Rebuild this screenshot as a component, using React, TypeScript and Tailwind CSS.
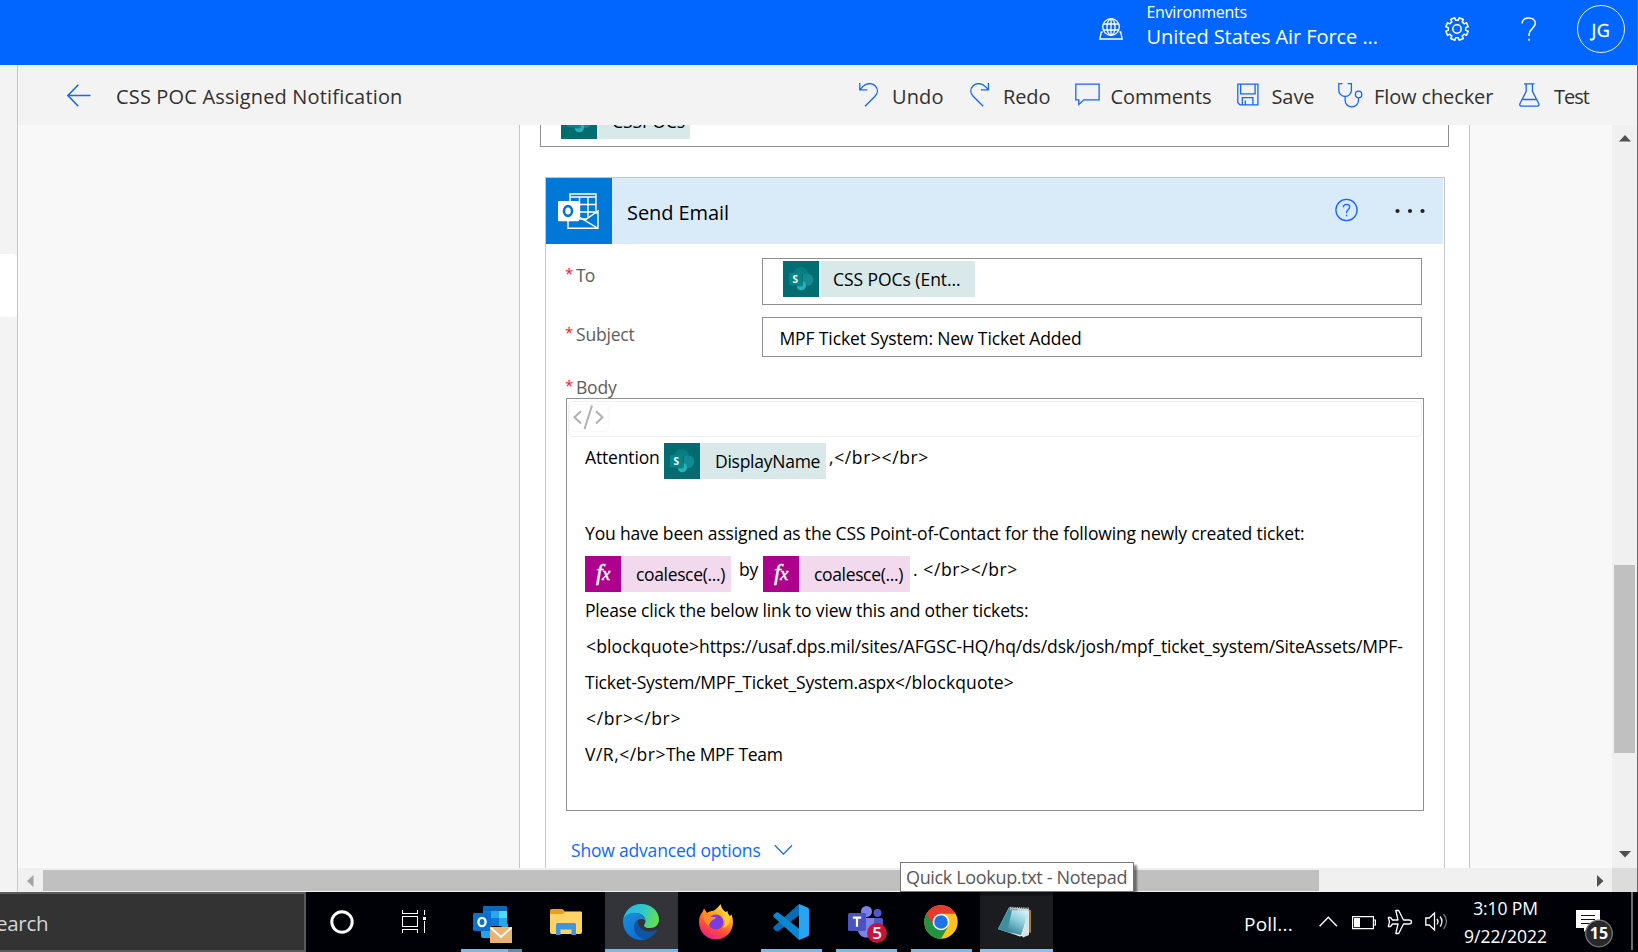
import type { ReactNode } from "react";

type IconProps = { className?: string };

function Label({ className = "", children }: { className?: string; children: ReactNode }) {
  return <span className={`block shrink-0 whitespace-pre ${className}`}>{children}</span>;
}

/* ---------- header icons ---------- */

function EnvironmentIcon({ className }: IconProps) {
  return (
    <svg className={className} width="24" height="22" viewBox="0 0 24 22" fill="none" stroke="white" strokeWidth="1.3">
      <circle cx="12" cy="9" r="8.3" />
      <ellipse cx="12" cy="9" rx="4" ry="8.3" />
      <path d="M12 .7v16.6M4.4 6h15.2M4.4 12h15.2M3.7 14H2.3L.8 21h22.4l-1.5-7h-1.4" />
    </svg>
  );
}

function gearPath() {
  const pts: string[] = [];
  const teeth = 8;
  for (let i = 0; i < teeth; i++) {
    const base = (i / teeth) * Math.PI * 2 - Math.PI / 2 + Math.PI / 8;
    const steps: [number, number][] = [[-0.24, 8.8], [-0.2, 11.4], [0.2, 11.4], [0.24, 8.8]];
    steps.forEach(([a, r]) => pts.push(`${(12 + Math.cos(base + a) * r).toFixed(2)} ${(12 + Math.sin(base + a) * r).toFixed(2)}`));
  }
  return `M${pts.join("L")}Z`;
}

function GearIcon({ className }: IconProps) {
  return (
    <svg className={className} width="24" height="24" viewBox="0 0 24 24" fill="none" stroke="white" strokeWidth="1.5" strokeLinejoin="round">
      <path d={gearPath()} />
      <circle cx="12" cy="12" r="4.2" />
    </svg>
  );
}

function HelpIcon({ className }: IconProps) {
  return (
    <svg className={className} width="16" height="24" viewBox="0 0 16 24" fill="none" stroke="white" strokeWidth="1.5">
      <path d="M1.200 6.500C1.200 3 4 .9 7.700 .9s6.600 2 6.600 5.400c0 5-6.300 5.700-6.300 11.200v1.500M8 21.700v2" />
    </svg>
  );
}

/* ---------- command bar icons ---------- */

const blueLine = { fill: "none", stroke: "#1466ff", strokeWidth: 1.3 };

function BackIcon({ className }: IconProps) {
  return (
    <svg className={className} width="24" height="23" viewBox="0 0 24 23" {...blueLine} strokeWidth="1.6">
      <path d="M11.300 .8.9 11.500l10.400 10.700M1 11.500h22.500" />
    </svg>
  );
}

function UndoIcon({ className }: IconProps) {
  return (
    <svg className={className} width="20" height="24" viewBox="0 0 20 24" {...blueLine}>
      <path d="M.8 0v6.800h7.500M1 6.600l2.800-3C8-.7 13.500 0 16.300 3c3 3.200 2.700 7.300-.3 10.300L6 23.300" />
    </svg>
  );
}

function RedoIcon({ className }: IconProps) {
  return (
    <svg className={className} width="20" height="24" viewBox="0 0 20 24" {...blueLine}>
      <path d="M18.400 0v6.800h-7.500M18.200 6.600l-2.800-3C11.200-.7 5.700 0 2.900 3c-3 3.200-2.700 7.300.3 10.300l10 10" />
    </svg>
  );
}

function CommentIcon({ className }: IconProps) {
  return (
    <svg className={className} width="25" height="23" viewBox="0 0 25 23" {...blueLine}>
      <path d="M.8 1.200h23.300v15.600H8.800l-5 4.700v-4.700h-3z" />
    </svg>
  );
}

function SaveIcon({ className }: IconProps) {
  return (
    <svg className={className} width="22" height="23" viewBox="0 0 22 23" {...blueLine}>
      <path d="M.8 1.200h20.100v20.600H3L.8 19.700zM3.600 1.200v9.600h14.500V1.200M5.300 21.800v-7.200h10.600v7.200M8.300 17.500v4.300" />
    </svg>
  );
}

function StethoscopeIcon({ className }: IconProps) {
  return (
    <svg className={className} width="25" height="25" viewBox="0 0 25 25" {...blueLine}>
      <path d="M4.500 .7H.8v6.500a6.200 6.200 0 0 0 12.600 0V.7H9.700M7.100 13.400v3.800a6.700 6.700 0 0 0 13.400 0v-2.500" />
      <circle cx="20.600" cy="11.400" r="3.200" />
    </svg>
  );
}

function FlaskIcon({ className }: IconProps) {
  return (
    <svg className={className} width="21" height="24" viewBox="0 0 21 24" {...blueLine}>
      <path d="M5 .8h10.500M7.200 .8v7.500L1 20.500c-.7 1.500 0 2.700 1.400 2.700h15.900c1.400 0 2.100-1.200 1.400-2.700L13.400 8.300V.8M3.700 16.500H17" />
    </svg>
  );
}

function Command({ icon, label, box, gap }: { icon: ReactNode; label: string; box: string; gap: string }) {
  return (
    <div className="flex shrink-0 items-start">
      <div className={`shrink-0 ${gap}`}>{icon}</div>
      <Label className={`pt-[2px] text-[20px] leading-[24px] text-[#323130] ${box}`}>{label}</Label>
    </div>
  );
}

/* ---------- flow tokens ---------- */

function SharePointTile() {
  return (
    <svg className="shrink-0" width="36" height="36" viewBox="0 0 36 36">
      <rect width="36" height="36" fill="#036c70" />
      <circle cx="17.700" cy="13.500" r="7.500" fill="#067e82" />
      <circle cx="24" cy="18.700" r="6.300" fill="#118b91" />
      <circle cx="18.300" cy="24.600" r="4.700" fill="#27b3be" />
      <rect x="7" y="13" width="13" height="12.500" rx="1" fill="#02565a" opacity=".5" />
      <rect x="6" y="12" width="12.600" height="12.400" rx="1" fill="#078489" />
      <text x="12.300" y="21.800" fontSize="10" fontWeight="700" fontFamily="Open Sans, sans-serif" textAnchor="middle" fill="white">S</text>
    </svg>
  );
}

function SharePointToken({ label, box, text = "leading-[36px] tracking-[-0.2px]" }: { label: string; box: string; text?: string }) {
  return (
    <div className={`flex h-9 shrink-0 bg-[#d9e8e8] ${box}`}>
      <SharePointTile />
      <Label className={`pl-[14px] text-[17.5px] ${text}`}>{label}</Label>
    </div>
  );
}

function FxToken({ box }: { box: string }) {
  return (
    <div className={`flex h-9 shrink-0 bg-[#f2d9ee] ${box}`}>
      <span className="block h-9 w-9 bg-[#ad008c] text-center font-['Liberation_Serif',serif] text-[24px] leading-[33px] font-normal tracking-[-0.5px] text-white italic [-webkit-text-stroke:0.4px_white]">
        f<span className="text-[19px]">x</span>
      </span>
      <Label className="pl-[15px] text-[17.5px] leading-[37px] tracking-[-0.35px]">coalesce(...)</Label>
    </div>
  );
}

function OutlookConnectorTile() {
  return (
    <svg className="shrink-0" width="66" height="66" viewBox="0 0 66 66">
      <rect width="66" height="66" fill="#0078d7" />
      <g fill="none" stroke="white" strokeWidth="1.400">
        <path d="M24 23v-7h26v20M24 19h26" />
        <path d="M33.500 19v22M42 19v20M24 26.500h26M24 34h25M33 41h8" />
        <path d="M22 43v7.300h30V33L38.500 42.300 52 50.300M34 39.500l4.500 2.800" />
      </g>
      <rect x="12" y="23" width="21" height="20.300" rx="1" fill="white" />
      <ellipse cx="22" cy="33" rx="4" ry="4.900" fill="none" stroke="#0078d7" strokeWidth="2.600" />
    </svg>
  );
}

function FieldLabel({ children, className = "" }: { children: ReactNode; className?: string }) {
  return (
    <div className={`flex shrink-0 text-[17.5px] leading-[24px] ${className}`}>
      <span className="w-[11px] text-[15px] leading-[21px] text-[#e0202f]">*</span>
      <span className="text-[#605e5c]">{children}</span>
    </div>
  );
}

/* ---------- taskbar ---------- */

function OutlookAppIcon() {
  return (
    <svg width="40" height="38" viewBox="0 0 40 38">
      <rect x="10" y="0" width="24" height="20" rx="1.500" fill="#0f6cbd" />
      <rect x="10" y="0" width="24" height="5" rx="1" fill="#1068b5" />
      <path d="M10 5h8v7h-8z" fill="#0f78d4" />
      <path d="M18 5h8v7h-8z" fill="#28a8ea" />
      <path d="M26 5h8v7h-8z" fill="#50d9ff" />
      <path d="M18 12h8v8h-8z" fill="#0f78d4" />
      <path d="M26 12h8v8h-8z" fill="#28a8ea" />
      <path d="M8 16l14 8 13-7v15H10a2 2 0 0 1-2-2z" fill="#1fa5e8" />
      <rect x="0" y="7" width="18" height="18" rx="1.500" fill="#0a70cf" />
      <ellipse cx="9" cy="16" rx="3.600" ry="4.200" fill="none" stroke="white" strokeWidth="2.300" />
      <rect x="17" y="21" width="22" height="16" fill="#e9b372" />
      <path d="M17.500 21.500 28 31l10.500-9.500" fill="none" stroke="white" strokeWidth="1.800" />
    </svg>
  );
}

function ExplorerIcon() {
  return (
    <svg width="32" height="27" viewBox="0 0 32 27">
      <path d="M0 1.500Q0 0 1.500 0h11l2.500 2.500h16Q32 2.500 32 4v8H0z" fill="#e4a11b" />
      <path d="M0 5h13l2-2.300h16q1 0 1 1V23q0 2-2 2H2q-2 0-2-2z" fill="#fdd465" />
      <path d="M6 15.500Q6 14 7.500 14h17q1.500 0 1.500 1.500V26h-4.500v-5.500h-11V26H6z" fill="#3d96de" />
    </svg>
  );
}

function EdgeIcon() {
  return (
    <svg width="36" height="36" viewBox="0 0 36 36">
      <defs>
        <linearGradient id="edgeTop" x1="0" y1="0.300" x2="1" y2="0.600">
          <stop offset="0" stopColor="#29b6ea" />
          <stop offset=".5" stopColor="#2fc7c9" />
          <stop offset="1" stopColor="#66e14b" />
        </linearGradient>
        <linearGradient id="edgeLeft" x1="0" y1="0" x2=".5" y2="1">
          <stop offset="0" stopColor="#1b8fd6" />
          <stop offset="1" stopColor="#0a72d8" />
        </linearGradient>
      </defs>
      <path d="M0 17C1 7 8.500 0 18 0c10.500 0 18 7.500 18 15.500 0 5-3.800 8.500-9 8.500-4 0-6-1.300-6-2.600 0-1 1.500-1.700 1.500-4.400 0-4-4-8-10-8C6 9 1.500 12.500 0 17z" fill="url(#edgeTop)" />
      <path d="M0 18C0 12.500 5 8.800 11.500 8.800c6.500 0 10.800 3.700 11 7.800-1-1-2.500-1.700-4.300-1.700-4 0-6.400 3.200-6.400 7.300 0 6.500 5 12.300 11.800 12.800A18 18 0 0 1 0 18z" fill="url(#edgeLeft)" />
      <path d="M15 15.700c-6.500 3.800-5.400 15.800 5 19.300 5.500 1.300 11-3.500 13.800-8 .3-.7-.3-1-1-.7-8 3.500-18.500-.5-17.800-10.600z" fill="#1054a4" />
    </svg>
  );
}

function FirefoxIcon() {
  return (
    <svg width="34" height="36" viewBox="0 0 34 36">
      <defs>
        <linearGradient id="ffBody" x1=".8" y1="0" x2=".3" y2="1">
          <stop offset="0" stopColor="#fff44f" />
          <stop offset=".4" stopColor="#ff9a1f" />
          <stop offset=".7" stopColor="#ff4a3c" />
          <stop offset="1" stopColor="#e5208a" />
        </linearGradient>
      </defs>
      <path d="M3.500 8 5 4.500 8 9c2-1.500 4-2 6-2 3-1.500 5.500-4 7.500-7 .5 2.700 1.500 4.500 3.200 6.500L26.500 8l2-1c0 2 1 3.500 2.500 5l1.500-1.500c1 2.500 1.500 5 1.500 7.500C34 28 26.500 35.500 17 35.500S0 28 0 18c0-4 1.200-7.500 3.500-10z" fill="url(#ffBody)" />
      <circle cx="17" cy="18" r="7.500" fill="#7a3be0" />
      <path d="M4 12c3-1.500 6-1 8 1h5c-.5 2-2.500 2.500-4 3.500-1.500 1-2 2.500-3.500 5.500-3-2-4.500-6-5.500-10z" fill="#ff8f24" />
      <path d="M23 5c2 4 1 6 .5 8 3 3 3 8 0 11 5-1 8-5 7.500-10z" fill="#ffd43a" opacity=".8" />
    </svg>
  );
}

function VsCodeIcon() {
  return (
    <svg width="36" height="36" viewBox="0 0 36 36">
      <path d="M26 0 1 22.500c-1 1-1 2 0 3L3 27c1 .7 1.800.6 2.600 0L26.500 11z" fill="#0a6cb4" />
      <path d="M26 36 1 13.300c-1-1-1-2 0-3L3 8.800c1-.7 1.800-.6 2.600 0L26.500 25z" fill="#0f86d0" />
      <path d="M26 0l8.500 3.500c1 .5 1.500 1.200 1.500 2.300v24.400c0 1-.5 1.800-1.500 2.300L26 36z" fill="#27a4f2" />
    </svg>
  );
}

function TeamsIcon() {
  return (
    <svg width="40" height="38" viewBox="0 0 40 38">
      <circle cx="18.500" cy="5.500" r="5.500" fill="#7b83eb" />
      <circle cx="29.500" cy="7" r="4" fill="#5059c9" />
      <path d="M24 12h9.500q1.500 0 1.500 1.500V23c0 4-4 6-8 5z" fill="#5059c9" />
      <path d="M10 12h16v12c0 10-15 10-16 0z" fill="#7b83eb" />
      <rect x="0" y="7" width="18" height="18" rx="1.500" fill="#4b53bc" />
      <path d="M4.800 11.700h8.400M9 11.700v9" stroke="white" strokeWidth="2.200" />
      <circle cx="29" cy="27" r="10" fill="#c4143b" />
      <text x="29" y="33" textAnchor="middle" fontSize="17" fontWeight="600" fontFamily="Open Sans, sans-serif" fill="white">5</text>
    </svg>
  );
}

function ChromeIcon() {
  return (
    <svg width="34" height="34" viewBox="0 0 34 34">
      <circle cx="17" cy="17" r="16.700" fill="#fcc31e" />
      <path d="M17 17 2.500 8.700A16.700 16.700 0 0 0 17 33.700l7.200-12.500z" fill="#229342" />
      <path d="M2.500 8.700A16.700 16.700 0 0 1 31.500 8.700H17z M2.500 8.700 9.800 21.200 17 17V8.700z" fill="#e33b2e" />
      <circle cx="17" cy="17" r="8.300" fill="white" />
      <circle cx="17" cy="17" r="6.800" fill="#1a73e8" />
    </svg>
  );
}

function NotepadIcon() {
  return (
    <svg width="34" height="32" viewBox="0 0 34 32">
      <defs>
        <linearGradient id="page" x1=".2" y1="1" x2=".7" y2="0">
          <stop offset="0" stopColor="#2f7f93" />
          <stop offset=".6" stopColor="#8fd0de" />
          <stop offset="1" stopColor="#d4eef3" />
        </linearGradient>
      </defs>
      <path d="M30 4h3v23l-3-1z" fill="#a87a2a" />
      <path d="M11 1.500 0 23l22 7.500L31 28V3z" fill="#dfeef0" />
      <path d="M11 2 0 23l10 3.500L20 3z" fill="#3f8fa0" />
      <path d="M14 4 9 26l14 3L31 4.500z" fill="url(#page)" />
      <path d="M24 30l7-25v24l-6 2.500z" fill="#d9e2e4" />
      <path d="M12 2.500l19 .8" stroke="#b9bfc2" strokeWidth="3.500" strokeDasharray="1.200 1" />
    </svg>
  );
}

function TaskButton({ children, box, bar, pad }: { children: ReactNode; box: string; bar: string; pad: string }) {
  return (
    <div className={`flex h-[60px] shrink-0 flex-col justify-between ${box}`}>
      <div className={pad}>{children}</div>
      <div className={`flex h-[3px] ${bar}`} />
    </div>
  );
}

function Taskbar() {
  return (
    <div className="flex h-[60px] w-full bg-[#000107] text-white">
      <div className="h-[60px] w-[306px] shrink-0 overflow-hidden border-y-2 border-r-2 border-[#5c5c5c] bg-[#333333]">
        <Label className="-ml-[4px] text-[20.5px] leading-[59px] tracking-[-0.3px] text-[#d6d6d6]">earch</Label>
      </div>
      <div className="w-[96px] shrink-0 pt-[18px] pl-[24px]">
        <svg width="24" height="24" viewBox="0 0 24 24">
          <circle cx="12" cy="12" r="10.200" fill="none" stroke="white" strokeWidth="3" />
        </svg>
      </div>
      <div className="w-[59px] shrink-0 pt-[18px]">
        <svg width="25" height="24" viewBox="0 0 25 24" fill="none" stroke="white" shapeRendering="crispEdges">
          <path d="M.5 0v3.500h15V0M.5 6.500h15v10H.5zM.5 23v-3.500h15V23M22.500 0v5M22.500 11v12" />
          <path d="M21 7h3v3h-3z" fill="white" stroke="none" />
        </svg>
      </div>
      <div className="flex h-[60px] w-[61px] shrink-0 flex-col justify-between">
        <div className="pt-[14px] pl-[12px]"><OutlookAppIcon /></div>
        <div className="flex h-[3px]">
          <div className="w-[47px] bg-[#76b9ed]" />
          <div className="w-[14px] bg-[#5c8ab0]" />
        </div>
      </div>
      <TaskButton box="ml-[28px] w-[55px]" pad="pt-[17px]" bar=""><ExplorerIcon /></TaskButton>
      <TaskButton box="w-[73px] bg-[#33343a]" pad="pt-[12px] pl-[18px]" bar="bg-[#76b9ed]"><EdgeIcon /></TaskButton>
      <TaskButton box="ml-[21px] w-[62px]" pad="pt-[12px]" bar=""><FirefoxIcon /></TaskButton>
      <TaskButton box="w-[61px]" pad="pt-[12px] pl-[12px]" bar="bg-[#76b9ed]"><VsCodeIcon /></TaskButton>
      <TaskButton box="ml-[14px] w-[61px]" pad="pt-[14px] pl-[12px]" bar="bg-[#76b9ed]"><TeamsIcon /></TaskButton>
      <TaskButton box="ml-[14px] w-[61px]" pad="pt-[13px] pl-[13px]" bar="bg-[#76b9ed]"><ChromeIcon /></TaskButton>
      <TaskButton box="ml-[8px] w-[73px] bg-[#1b1c20]" pad="pt-[14px] pl-[18px]" bar="bg-[#85c1f0]"><NotepadIcon /></TaskButton>
      <Label className="ml-[191px] w-[75px] text-[19px] leading-[65px] tracking-[0.2px]">Poll...</Label>
      <svg className="mt-[24px] shrink-0" width="19" height="11" viewBox="0 0 19 11" fill="none" stroke="white" strokeWidth="1.400">
        <path d="M.6 10.200 9.300 1.300l8.700 8.900" />
      </svg>
      <svg className="mt-[24px] ml-[14px] shrink-0" width="24" height="14" viewBox="0 0 24 14">
        <path d="M.6 .6h20.800v12H.6zM22 4h1.400v5H22" fill="none" stroke="white" strokeWidth="1.200" />
        <rect x="2" y="2" width="6" height="9.200" fill="white" />
      </svg>
      <svg className="mt-[17px] ml-[11px] shrink-0" width="26" height="26" viewBox="0 0 26 26" fill="none" stroke="white" strokeWidth="1.300" strokeLinejoin="round">
        <path d="M24.500 13c0-1.200-1.200-2-2.700-2h-5.300L11.700 1.500H8.800L11 11H5.500L3.500 8.500H1.300L2.500 13l-1.200 4.500h2.200l2-2.500H11L8.800 24.500h2.900l4.800-9.500h5.300c1.500 0 2.700-.8 2.700-2z" />
      </svg>
      <svg className="mt-[19px] ml-[12px] shrink-0" width="24" height="22" viewBox="0 0 24 22" fill="none" stroke="white" strokeWidth="1.300">
        <path d="M.8 7v7h3.400L9.500 19V2L4.200 7z" />
        <path d="M12 8q2 2.500 0 5.500M15 5.500q4 5 0 10" />
        <path d="M18.500 3q6 7.500 0 15" stroke="#777" />
      </svg>
      <div className="ml-[10px] flex w-[93px] shrink-0 flex-col items-center pt-[2px] text-[17.5px] leading-[28px]">
        <Label className="tracking-[-0.1px]">3:10 PM</Label>
        <Label>9/22/2022</Label>
      </div>
      <div className="ml-[24px] w-[55px] shrink-0 pt-[17px]">
        <svg width="39" height="40" viewBox="0 0 39 40">
          <path d="M0 1h24v18H12l-4 4v-4H0z" fill="white" />
          <path d="M5 6.500h14M5 10.500h14M5 14.500h9" stroke="#111" strokeWidth="1.200" />
          <circle cx="23" cy="24.500" r="13.300" fill="#29292b" stroke="#777" strokeWidth="1.300" />
          <text x="23" y="30.300" textAnchor="middle" fontSize="16" fontWeight="700" fontFamily="Open Sans, sans-serif" fill="white">15</text>
        </svg>
      </div>
      <div className="h-[58px] w-[2px] shrink-0 bg-[#6c6c6c]" />
    </div>
  );
}

/* ---------- page ---------- */

function Header() {
  return (
    <header className="flex h-[65px] shrink-0 items-start bg-[#0066ff] pl-[1099px] text-white">
      <EnvironmentIcon className="mt-[18px] shrink-0" />
      <div className="ml-[23.500px] w-[298.500px] shrink-0">
        <Label className="pt-[1px] text-[16px] leading-[23px] tracking-[-0.275px]">Environments</Label>
        <Label className="pt-[1px] text-[20px] leading-[24px] tracking-[-0.07px]">United States Air Force ...</Label>
      </div>
      <GearIcon className="mt-[17px] shrink-0" />
      <HelpIcon className="mt-[17px] ml-[52px] shrink-0" />
      <div className="mt-[5px] ml-[40px] h-12 w-12 shrink-0 rounded-full border border-white/90 text-center text-[18px] leading-[49px] tracking-[0.5px] [-webkit-text-stroke:0.3px_white]">JG</div>
    </header>
  );
}

function CommandBar() {
  return (
    <div className="flex h-[60px] shrink-0 items-start bg-[#f3f3f3] pt-[18px] pl-[48px]">
      <BackIcon className="mt-px ml-px shrink-0" />
      <Label className="ml-[25px] w-[743px] text-[20px] leading-[28px] tracking-[0.16px] text-[#323130]">CSS POC Assigned Notification</Label>
      <Command icon={<UndoIcon />} gap="w-[33px]" box="w-[78px] tracking-[0.1px]" label="Undo" />
      <Command icon={<RedoIcon />} gap="w-[33px]" box="w-[72px] tracking-[-0.1px]" label="Redo" />
      <Command icon={<CommentIcon />} gap="w-[35.500px]" box="w-[126.500px] tracking-[-0.12px]" label="Comments" />
      <Command icon={<SaveIcon />} gap="w-[34.500px]" box="w-[66.500px] tracking-[-0.1px]" label="Save" />
      <Command icon={<StethoscopeIcon />} gap="w-[36px]" box="w-[145px] tracking-[-0.12px]" label="Flow checker" />
      <Command icon={<FlaskIcon />} gap="w-[35px]" box="w-[60px] tracking-[-1px]" label="Test" />
    </div>
  );
}

const bodyText = "text-[17.5px] leading-[36px]";

function BodyEditor() {
  return (
    <div className="h-[413px] w-[858px] shrink-0 border border-[#8f8f8f] px-px pt-[2px]">
      <div className="flex h-[36px] rounded-sm border border-[#efefef] pt-[2px]">
        <div className="h-7 w-10 rounded-sm border border-[#f7f7f7] pl-[3px]">
          <svg width="31" height="25" viewBox="0 0 31 25" fill="none" stroke="#b0b0b0" strokeWidth="2">
            <path d="M8 6.200 1.500 12.300 8 18.500M23 6.200l6.500 6.100L23 18.500M19 .5 11.500 24" />
          </svg>
        </div>
      </div>
      <div className="pt-[6px] pl-[17px]">
        <div className="flex h-9 items-start">
          <Label className="w-[79px] text-[17.5px] leading-[28px] tracking-[-0.16px]">Attention</Label>
          <SharePointToken label="DisplayName" box="w-[162px]" text="pl-[15px] leading-[36px] tracking-[-0.26px]" />
          <Label className="ml-[3px] text-[17.5px] leading-[28px] tracking-[0.62px]">{",</br></br>"}</Label>
        </div>
        <div className="h-9" />
        <Label className={`${bodyText} tracking-[-0.143px]`}>You have been assigned as the CSS Point-of-Contact for the following newly created ticket:</Label>
        <div className="flex items-start pt-[5px]">
          <FxToken box="w-[146px]" />
          <Label className="ml-[8px] w-[24px] text-[17.5px] leading-[27px] tracking-[-0.1px]">by</Label>
          <FxToken box="w-[147px]" />
          <Label className="ml-[3px] text-[17.5px] leading-[27px] tracking-[0.6px]">{". </br></br>"}</Label>
        </div>
        <Label className={`${bodyText} tracking-[-0.169px]`}>Please click the below link to view this and other tickets:</Label>
        <Label className={`${bodyText} tracking-[-0.135px]`}>
          <span className="pl-px tracking-[0.15px]">{"<blockquote>"}</span>https://usaf.dps.mil/sites/AFGSC-HQ/hq/ds/dsk/josh/mpf_ticket_system/SiteAssets/MPF-
        </Label>
        <Label className={`${bodyText} tracking-[-0.24px]`}>
          Ticket-System/MPF_Ticket_System.aspx<span className="tracking-[0.1px]">{"</blockquote>"}</span>
        </Label>
        <Label className={`${bodyText} pl-px tracking-[0.65px]`}>{"</br></br>"}</Label>
        <Label className={`${bodyText} tracking-[-0.27px]`}>
          <span className="tracking-[0.5px]">{"V/R,</br>"}</span>The MPF Team
        </Label>
      </div>
    </div>
  );
}

function EmailCard() {
  return (
    <section className="mt-[30px] ml-[25px] h-[700px] w-[900px] shrink-0 border border-[#c8c6c4]">
      <div className="mr-px flex h-[66px] items-center bg-[#d9eaf8]">
        <OutlookConnectorTile />
        <Label className="w-[722px] pt-[3px] pl-[15px] text-[20px] leading-[24px] tracking-[-0.08px]">Send Email</Label>
        <svg className="-mt-[2px] shrink-0" width="24" height="24" viewBox="0 0 24 24" {...blueLine}>
          <circle cx="12.500" cy="12" r="10.600" />
          <path d="M9.300 9.200c0-1.800 1.300-2.900 3.200-2.900s3.200 1.100 3.200 2.800c0 2.500-3.100 2.800-3.100 5.300v.8M12.600 16.700v1.500" />
        </svg>
        <svg className="-mt-[1px] ml-[37px] shrink-0" width="30" height="6" viewBox="0 0 30 6" fill="#252423">
          <circle cx="2.500" cy="3" r="2.100" />
          <circle cx="15" cy="3" r="2.100" />
          <circle cx="27.500" cy="3" r="2.100" />
        </svg>
      </div>
      <div className="pl-[20px]">
        <div className="flex h-[73px] items-start pt-[14px]">
          <FieldLabel className="-ml-px w-[197px] pt-[5px] tracking-[-0.8px]">To</FieldLabel>
          <div className="flex h-[47px] w-[660px] shrink-0 border border-[#8f8f8f] pt-[2px] pl-[20px]">
            <SharePointToken label="CSS POCs (Ent..." box="w-[192px]" text="leading-[36px] tracking-[-0.05px]" />
          </div>
        </div>
        <div className="flex h-[67px] items-start">
          <FieldLabel className="-ml-px w-[197px] pt-[5px] tracking-[-0.2px]">Subject</FieldLabel>
          <div className="h-[40px] w-[660px] shrink-0 border border-[#8f8f8f] pl-[16.500px]">
            <Label className="text-[17.5px] leading-[41px] tracking-[-0.128px]">MPF Ticket System: New Ticket Added</Label>
          </div>
        </div>
        <FieldLabel className="-mt-[9px] -ml-px h-[23px] tracking-[-0.2px]">Body</FieldLabel>
        <BodyEditor />
        <div className="flex items-start pt-[27px] pl-[5px]">
          <Label className="w-[203px] text-[17.5px] leading-[24px] tracking-[-0.19px] text-[#1068ff]">Show advanced options</Label>
          <svg className="mt-[6px]" width="19" height="12" viewBox="0 0 19 12" {...blueLine}>
            <path d="M.8 1.300l8.600 8.800L18 1.300" />
          </svg>
        </div>
      </div>
    </section>
  );
}

function Canvas() {
  return (
    <div className="flex h-[743px] w-[1594px] shrink-0 overflow-hidden bg-[#f8f8f8]">
      <div className="ml-[501px] w-[951px] shrink-0 border-x border-[#c8c6c4] bg-white">
        <div className="ml-[20px] h-[22px] w-[909px] shrink-0 border-x border-b border-[#8f8f8f] pl-[20px]">
          <div className="flex h-[14px] w-[129px] flex-col justify-end overflow-hidden">
            <SharePointToken label="CSSPOCs" box="w-[129px]" text="pl-[15px] leading-[37px] tracking-[-0.1px]" />
          </div>
        </div>
        <EmailCard />
      </div>
    </div>
  );
}

function VerticalScrollbar() {
  return (
    <div className="flex h-[743px] w-[25px] shrink-0 flex-col items-center bg-[#f0f0f0]">
      <svg className="mt-[10px] shrink-0" width="12" height="7" viewBox="0 0 12 7"><path d="M6 0l6 6.500H0z" fill="#505050" /></svg>
      <div className="mt-[423px] h-[188px] w-[21px] bg-[#c0c0c0]" />
      <svg className="mt-[98px] shrink-0" width="12" height="7" viewBox="0 0 12 7"><path d="M6 6.500l6-6.500H0z" fill="#505050" /></svg>
    </div>
  );
}

function HorizontalScrollbar() {
  return (
    <div className="flex h-6 shrink-0">
      <div className="flex w-[1594px] shrink-0 items-start bg-[#f0f0f0] pl-[9px]">
        <svg className="mt-[7px] shrink-0" width="7" height="12" viewBox="0 0 7 12"><path d="M0 6l6.500-6v12z" fill="#a3a3a3" /></svg>
        <div className="mt-[2px] ml-[9px] h-[21px] w-[1276px] shrink-0 bg-[#c0c0c0]" />
        <svg className="mt-[7px] ml-[278px] shrink-0" width="7" height="12" viewBox="0 0 7 12"><path d="M6.500 6L0 0v12z" fill="#505050" /></svg>
      </div>
      <div className="w-[25px] shrink-0 bg-[#dcdcdc]" />
    </div>
  );
}

export default function App() {
  return (
    <div className="relative h-[952px] w-[1638px] overflow-hidden bg-white font-['Open_Sans','Noto_Sans',sans-serif] text-black">
      <div className="flex h-[892px]">
        <div className="flex w-[1637px] shrink-0 flex-col">
          <Header />
          <div className="flex h-[827px]">
            <aside className="w-[18px] shrink-0 border-r border-[#c8c8c8] bg-[#f3f3f3] pt-[189px]">
              <div className="h-[63px] rounded-r-sm bg-white" />
            </aside>
            <main className="flex w-[1619px] shrink-0 flex-col">
              <CommandBar />
              <div className="flex">
                <Canvas />
                <VerticalScrollbar />
              </div>
              <HorizontalScrollbar />
            </main>
          </div>
        </div>
        <div className="w-px bg-[#6b6b6b]" />
      </div>
      <Taskbar />
      <div className="absolute top-[862px] left-[900px] h-[30px] w-[234px] border border-[#767676] bg-white pl-[5px] shadow-[3px_3px_2px_rgba(0,0,0,0.45)]">
        <Label className="text-[18px] leading-[29px] tracking-[-0.34px] text-[#575757]">Quick Lookup.txt - Notepad</Label>
      </div>
    </div>
  );
}
